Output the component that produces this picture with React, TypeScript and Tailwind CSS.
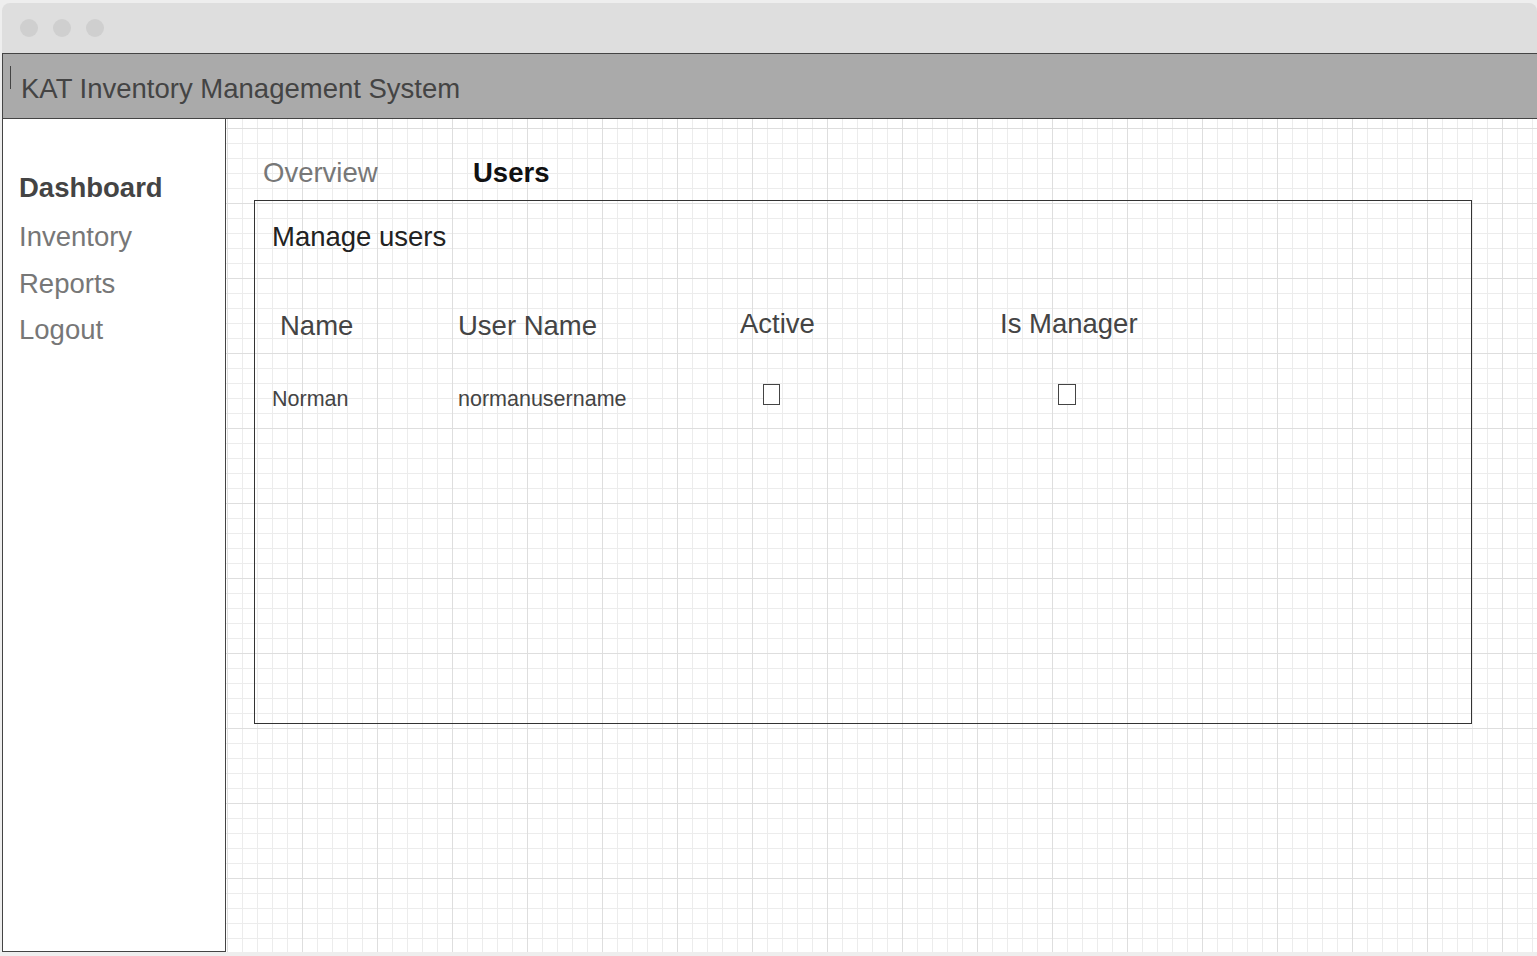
import React from "react";

const font = { fontFamily: '"Liberation Sans", Arial, sans-serif' };

export default function App() {
  return (
    <div
      className="w-[1537px] h-[956px] bg-[#eeeeee] overflow-hidden pt-[3px] pl-[2px]"
      style={font}
    >
      <div className="w-[1535px] h-[949px] flex flex-col">
        {/* chrome */}
        <div className="h-[50px] shrink-0 bg-[#dedede] rounded-t-[8px] flex items-center pl-[18px] gap-[15px]">
          <span className="block w-[18px] h-[18px] rounded-full bg-[#cfcfcf]" />
          <span className="block w-[18px] h-[18px] rounded-full bg-[#cfcfcf]" />
          <span className="block w-[18px] h-[18px] rounded-full bg-[#cfcfcf]" />
        </div>
        {/* body with grid */}
        <div className="flex-1 flex flex-col bg-white bg-[image:linear-gradient(to_right,#dedede_1px,transparent_1px),linear-gradient(to_bottom,#dedede_1px,transparent_1px),linear-gradient(to_right,#ececec_1px,transparent_1px),linear-gradient(to_bottom,#ececec_1px,transparent_1px)] bg-[length:75px_75px,75px_75px,15px_15px,15px_15px] bg-size-[75px_75px,75px_75px,15px_15px,15px_15px]">
          {/* header */}
          <div className="h-[66px] shrink-0 bg-[#aaaaaa] border-t border-b border-l border-[#444444] flex items-start pl-[7px]">
            <span className="block w-px h-[23px] bg-[#444444] mt-[12px]" />
            <span className="ml-[10px] mt-[19px] text-[27.5px] leading-[31px] text-[#444444] whitespace-nowrap">
              KAT Inventory Management System
            </span>
          </div>
          <div className="flex-1 flex">
            {/* sidebar */}
            <div className="w-[224px] shrink-0 bg-white border-l border-r border-b border-[#444444] flex flex-col pl-[16px] pt-[53px] text-[27.5px] leading-[31px]">
              <div className="font-bold text-[#444444]">Dashboard</div>
              <div className="text-[#777777] mt-[18px]">Inventory</div>
              <div className="text-[#777777] mt-[16px]">Reports</div>
              <div className="text-[#777777] mt-[15px]">Logout</div>
            </div>
            {/* main */}
            <div className="flex-1 pl-[28px] pt-[38px]">
              <div className="flex text-[27.5px] leading-[31px] pl-[9px]">
                <span className="w-[210px] text-[#777777]">Overview</span>
                <span className="font-bold text-[#111111]">Users</span>
              </div>
              <div className="mt-[12px] w-[1218px] h-[524px] border border-[#333333] flex flex-col">
                <div className="pl-[17px] pt-[20px] text-[27.5px] leading-[31px] text-[#222222]">
                  Manage users
                </div>
                <div className="mt-[56px] pl-[17px] grid grid-cols-[186px_282px_260px_1fr] items-start text-[27.5px] leading-[31px] text-[#444444]">
                  <span className="pl-[8px] pt-[2px]">Name</span>
                  <span className="pt-[2px]">User Name</span>
                  <span>Active</span>
                  <span>Is Manager</span>
                </div>
                <div className="mt-[43px] pl-[17px] grid grid-cols-[186px_282px_260px_1fr] items-start text-[21.5px] leading-[24px] text-[#444444]">
                  <span className="pt-[3px]">Norman</span>
                  <span className="pt-[3px]">normanusername</span>
                  <span className="pl-[23px]">
                    <span className="block w-[17px] h-[21px] border border-[#444444] bg-white" />
                  </span>
                  <span className="pl-[58px]">
                    <span className="block w-[18px] h-[21px] border border-[#444444] bg-white" />
                  </span>
                </div>
              </div>
            </div>
          </div>
        </div>
      </div>
    </div>
  );
}
